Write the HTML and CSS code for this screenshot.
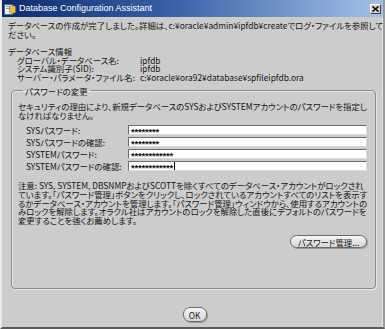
FILE: index.html
```html
<!DOCTYPE html>
<html lang="ja">
<head>
    <meta charset="UTF-8">
    <title>Database Configuration Assistant</title>
    <link rel="stylesheet" href="styles.css">
</head>
<body>

<div class="window">
    <div class="titlebar">
        <svg class="app-icon" width="12" height="12" viewBox="0 0 12 12">
            <rect x="0.5" y="1.5" width="8" height="10" fill="#e8f0f8" stroke="#4a6a9a"/>
            <rect x="2" y="3" width="5" height="1" fill="#7a9ac8"/>
            <rect x="2" y="5" width="5" height="1" fill="#7a9ac8"/>
            <ellipse cx="8.5" cy="4" rx="3" ry="1.3" fill="#f0d060" stroke="#8a7020" stroke-width="0.6"/>
            <path d="M5.5 4 V9 A3 1.3 0 0 0 11.5 9 V4" fill="#e8c040" stroke="#8a7020" stroke-width="0.6"/>
        </svg>
        <span class="title-text">Database Configuration Assistant</span>
        <div class="close-btn">
            <svg width="7" height="6" viewBox="0 0 7 6">
                <path d="M0.5 0.5 L6.5 5.5 M6.5 0.5 L0.5 5.5" stroke="#000" stroke-width="1.5"/>
            </svg>
        </div>
    </div>

    <div class="content">
        <p class="msg">データベースの作成が完了しました。詳細は、c:¥oracle¥admin¥ipfdb¥createでログ・ファイルを参照してく<br>ださい。</p>

        <div class="info">
            <div class="info-title">データベース情報</div>
            <div class="info-grid">
                <span>グローバル・データベース名:</span><span>ipfdb</span>
                <span>システム識別子(SID):</span><span>ipfdb</span>
                <span>サーバー・パラメータ・ファイル名:</span><span>c:¥oracle¥ora92¥database¥spfileipfdb.ora</span>
            </div>
        </div>

        <fieldset class="group">
            <legend>パスワードの変更</legend>
            <p class="group-msg">セキュリティの理由により、新規データベースのSYSおよびSYSTEMアカウントのパスワードを指定し<br>なければなりません。</p>

            <div class="pw-grid">
                <span>SYSパスワード:</span><div class="field">********</div>
                <span>SYSパスワードの確認:</span><div class="field">********</div>
                <span>SYSTEMパスワード:</span><div class="field">************</div>
                <span>SYSTEMパスワードの確認:</span><div class="field">************<span class="caret"></span></div>
            </div>

            <p class="note">注意: SYS, SYSTEM, DBSNMPおよびSCOTTを除くすべてのデータベース・アカウントがロックされ<br>ています。「パスワード管理」ボタンをクリックし、ロックされているアカウントすべてのリストを表示す<br>るかデータベース・アカウントを管理します。「パスワード管理」ウィンドウから、使用するアカウントの<br>みロックを解除します。オラクル社はアカウントのロックを解除した直後にデフォルトのパスワードを<br>変更することを強くお薦めします。</p>

            <div class="btn-row">
                <div class="btn">パスワード管理...</div>
            </div>
        </fieldset>

        <div class="ok-row">
            <div class="btn btn-ok">OK</div>
        </div>
    </div>
</div>

</body>
</html>
```

FILE: styles.css
```css
body {
    margin: 0;
    padding: 0;
    font-family: "Noto Sans CJK JP", sans-serif;
    font-size: 8.4px;
    line-height: 8.6px;
    color: #151515;
    background-color: #cccccc;
    white-space: nowrap;
}
.window {
    width: 385px;
    height: 329px;
    box-sizing: border-box;
    overflow: hidden;
    background-color: #cccccc;
    border-left: 2px solid #ececec;
    border-right: 2px solid #9a9a9a;
    border-bottom: 2px solid #5a5a5a;
    box-shadow: inset -1px 0 0 #e4e4e4;
    font-feature-settings: "palt";
}
.titlebar {
    height: 17px;
    display: flex;
    align-items: center;
    padding-left: 2px;
    background: linear-gradient(90deg, #0b2a6e 0%, #3a62a8 45%, #a4c2e8 100%);
    color: #fff;
}
.app-icon {
    margin-right: 3px;
}
.title-text {
    font-family: "Liberation Sans", sans-serif;
    font-size: 9px;
    flex: 1;
}
.close-btn {
    width: 11px;
    height: 10px;
    margin-right: 2px;
    box-sizing: border-box;
    background-color: #d4d0c8;
    border: 1px solid;
    border-color: #ffffff #404040 #404040 #ffffff;
    display: flex;
    justify-content: center;
    align-items: center;
}
.content {
    padding: 4px 0 0 6px;
}
.msg {
    margin: 0;
}
.info {
    margin-top: 9px;
}
.info-grid {
    display: grid;
    grid-template-columns: 123px 1fr;
    padding-left: 9px;
}
.group {
    margin: 5px 7px 0 3px;
    padding: 7px 8px 40px 6px;
    border: 1px solid #8c8c8c;
    border-radius: 4px;
    box-shadow: inset 1px 1px 0 #e6e6e6, 1px 1px 0 #e6e6e6;
}
.group legend {
    padding: 0 2px;
    margin-left: 5px;
}
.group-msg {
    margin: 0;
}
.pw-grid {
    display: grid;
    grid-template-columns: 102px 1fr;
    row-gap: 2px;
    margin-top: 6px;
    padding-left: 8px;
    align-items: center;
}
.field {
    height: 10px;
    box-sizing: border-box;
    background-color: #fff;
    border: 1px solid;
    border-color: #6e6e6e #dcdcdc #dcdcdc #6e6e6e;
    padding: 2px 0 0 2px;
    font-family: "Liberation Sans", sans-serif;
    font-size: 9.5px;
    font-weight: bold;
    line-height: 9px;
    display: flex;
    align-items: center;
    letter-spacing: -0.2px;
}
.caret {
    display: inline-block;
    width: 1px;
    height: 8px;
    margin: -2px 0 0 1px;
    background-color: #000;
}
.note {
    margin: 10px 0 0 0;
}
.btn-row {
    display: flex;
    justify-content: flex-end;
    margin-top: 11px;
}
.btn {
    height: 13px;
    box-sizing: border-box;
    padding: 0 7px;
    border: 1px solid #6a6a6a;
    border-radius: 7px;
    background: linear-gradient(#f6f6f6, #d6d6d6);
    box-shadow: 1px 1px 0 #9a9a9a;
    display: flex;
    align-items: center;
    justify-content: center;
}
.ok-row {
    display: flex;
    justify-content: center;
    margin-top: 18px;
    padding-right: 2px;
}
.btn-ok {
    width: 24px;
    height: 15px;
    padding: 0;
}
```
